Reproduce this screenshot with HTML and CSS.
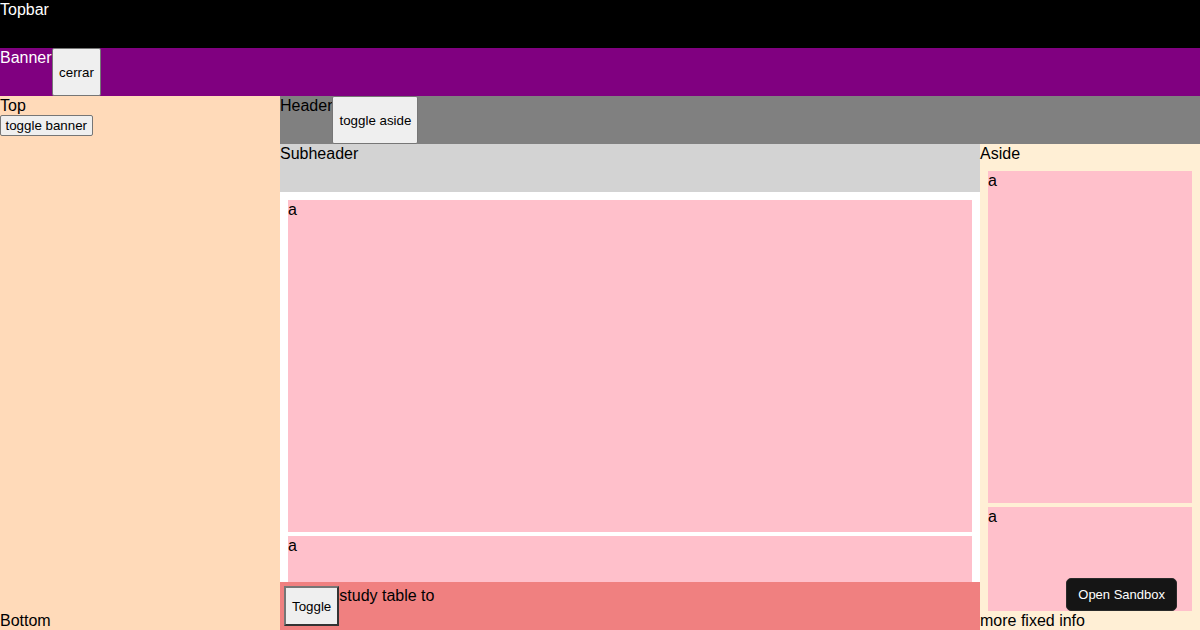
FILE: index.html
```html
<!DOCTYPE html>
<html lang="es">
<head>
<meta charset="utf-8">
<title>Layout</title>
<link rel="stylesheet" href="styles.css">
</head>
<body>
<div class="app">
  <div class="topbar">Topbar</div>
  <div class="banner"><span>Banner</span><button class="btn btn-native btn-close">cerrar</button></div>
  <div class="layout">
    <div class="sidebar">
      <div class="sidebar-top">
        <div>Top</div>
        <button class="btn btn-native btn-small">toggle banner</button>
      </div>
      <div>Bottom</div>
    </div>
    <div class="main">
      <div class="header"><span>Header</span><button class="btn btn-native">toggle aside</button></div>
      <div class="body">
        <div class="content">
          <div class="subheader">Subheader</div>
          <div class="scroll">
            <div class="box">a</div>
            <div class="box">a</div>
          </div>
          <div class="footer"><button class="btn btn-outset">Toggle</button><span>study table to</span></div>
        </div>
        <div class="aside">
          <div>Aside</div>
          <div class="aside-scroll">
            <div class="box">a</div>
            <div class="box">a</div>
          </div>
          <div>more fixed info</div>
        </div>
      </div>
    </div>
  </div>
</div>
<button class="sandbox">Open Sandbox</button>
</body>
</html>
```

FILE: styles.css
```css
html, body {
  margin: 0;
  padding: 0;
  height: 630px;
  overflow: hidden;
}
body {
  font-family: "Liberation Sans", Arial, sans-serif;
  font-size: 16px;
  line-height: 1.2;
  color: #000;
}
.app {
  display: flex;
  flex-direction: column;
  height: 630px;
}
.topbar {
  height: 48px;
  flex-shrink: 0;
  background: #000;
  color: #fff;
}
.banner {
  height: 48px;
  flex-shrink: 0;
  background: #800080;
  color: #fff;
  display: flex;
}
.btn {
  font-family: "Liberation Sans", Arial, sans-serif;
  font-size: 13.333px;
  line-height: normal;
  color: #000;
  margin: 0;
  cursor: pointer;
}
.btn-native {
  background: #efefef;
  border: 1px solid #767676;
  border-radius: 2px;
  padding: 1px 6px;
}
.btn-close {
  padding: 1px 6.5px;
}
.btn-small {
  height: 21px;
  padding: 1px 4.5px;
}
.btn-outset {
  background: #efefef;
  border-style: solid;
  border-width: 2px;
  border-color: #767676 #333 #333 #767676;
  padding: 1px 6px;
}
.layout {
  flex: 1;
  display: flex;
  min-height: 0;
}
.sidebar {
  width: 280px;
  flex-shrink: 0;
  background: #ffdab9;
  display: flex;
  flex-direction: column;
  justify-content: space-between;
}
.sidebar-top {
  display: flex;
  flex-direction: column;
  align-items: flex-start;
}
.main {
  flex: 1;
  display: flex;
  flex-direction: column;
  min-width: 0;
}
.header {
  height: 48px;
  flex-shrink: 0;
  background: #808080;
  display: flex;
}
.body {
  flex: 1;
  display: flex;
  min-height: 0;
}
.content {
  flex: 1;
  display: flex;
  flex-direction: column;
  min-width: 0;
}
.subheader {
  height: 48px;
  flex-shrink: 0;
  background: #d3d3d3;
}
.scroll {
  flex: 1;
  min-height: 0;
  overflow: hidden;
  background: #fff;
  padding: 8px;
  display: flex;
  flex-direction: column;
  gap: 4px;
}
.box {
  height: 332px;
  flex-shrink: 0;
  background: #ffc0cb;
}
.footer {
  height: 48px;
  flex-shrink: 0;
  box-sizing: border-box;
  background: #f08080;
  padding: 4px;
  display: flex;
}
.aside {
  width: 220px;
  flex-shrink: 0;
  background: #ffefd5;
  display: flex;
  flex-direction: column;
}
.aside-scroll {
  flex: 1;
  min-height: 0;
  overflow: hidden;
  padding: 8px 8px 0 8px;
  display: flex;
  flex-direction: column;
  gap: 4px;
}
.sandbox {
  position: fixed;
  right: 23px;
  bottom: 19px;
  height: 33px;
  padding: 0 11px;
  background: #151515;
  color: #fff;
  border: 1px solid #2a2a2a;
  border-radius: 5px;
  font-family: "Liberation Sans", Arial, sans-serif;
  font-size: 13px;
}
```
